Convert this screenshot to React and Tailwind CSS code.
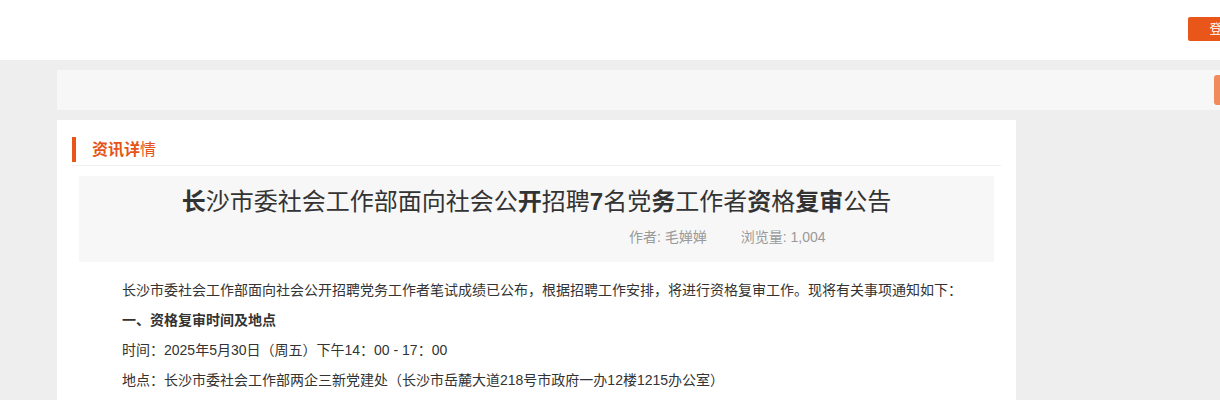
export default function App() {
  const font = { fontFamily: '"Liberation Sans", "Noto Sans CJK SC", sans-serif' };

  return (
    <div className="w-[1220px] min-h-screen overflow-hidden bg-[#efeeee]" style={font}>
      {/* ── Top header ── */}
      <header className="h-[60px] bg-white">
        <div className="ml-[57px] w-[1200px] h-full flex items-center justify-end">
          <button className="mt-[-2px] h-[24px] w-[69px] rounded-[2px] bg-[#e8561a] text-white text-[13px] leading-[24px]">
            登录
          </button>
        </div>
      </header>

      <div className="ml-[57px] w-[1200px] pt-[10px]">
        {/* Search strip */}
        <div className="h-[40px] bg-[#f7f7f7] flex items-center justify-end pr-[6px]">
          <div className="h-[30px] w-[37px] rounded-[3px] bg-[#ef8b5c]" />
        </div>

        {/* ── Article card ── */}
        <div className="mt-[10px] w-[959px] bg-white pb-[20px]">
          <div className="mx-[15px] pt-[17px] pb-[3px] border-b border-[#f0f0f0] flex items-center">
            <span className="w-[4px] h-[25px] bg-[#e8561a]" />
            <h2 className="ml-[16px] text-[16px] leading-[25px] text-[#e5541b]">
              <span className="font-bold">资讯详</span>情
            </h2>
          </div>

          <div className="mt-[10px] mx-[22px] bg-[#f7f7f7] pt-[10px] pb-[15px]">
            <h1 className="text-center text-[24px] leading-[32px] text-[#333]">
              <b>长</b>沙市委社会工作部面向社会公<b>开</b>招聘<b>7</b>名党<b>务</b>工作者<b>资</b>格<b>复审</b>公告
            </h1>
            <div className="mt-[9px] ml-[550px] flex gap-[34px] text-[14px] leading-[20px] text-[#999]">
              <span>作者: 毛婵婵</span>
              <span>浏览量: 1,004</span>
            </div>
          </div>

          <div className="mt-[13px] pl-[65px] text-[14px] leading-[30px] text-[#333]">
            <p>长沙市委社会工作部面向社会公开招聘党务工作者笔试成绩已公布，根据招聘工作安排，将进行资格复审工作。现将有关事项通知如下：</p>
            <p className="font-bold">一、资格复审时间及地点</p>
            <p>时间：2025年5月30日（周五）下午14：00 - 17：00</p>
            <p>地点：长沙市委社会工作部两企三新党建处（长沙市岳麓大道218号市政府一办12楼1215办公室）</p>
          </div>
        </div>
      </div>
    </div>
  );
}
